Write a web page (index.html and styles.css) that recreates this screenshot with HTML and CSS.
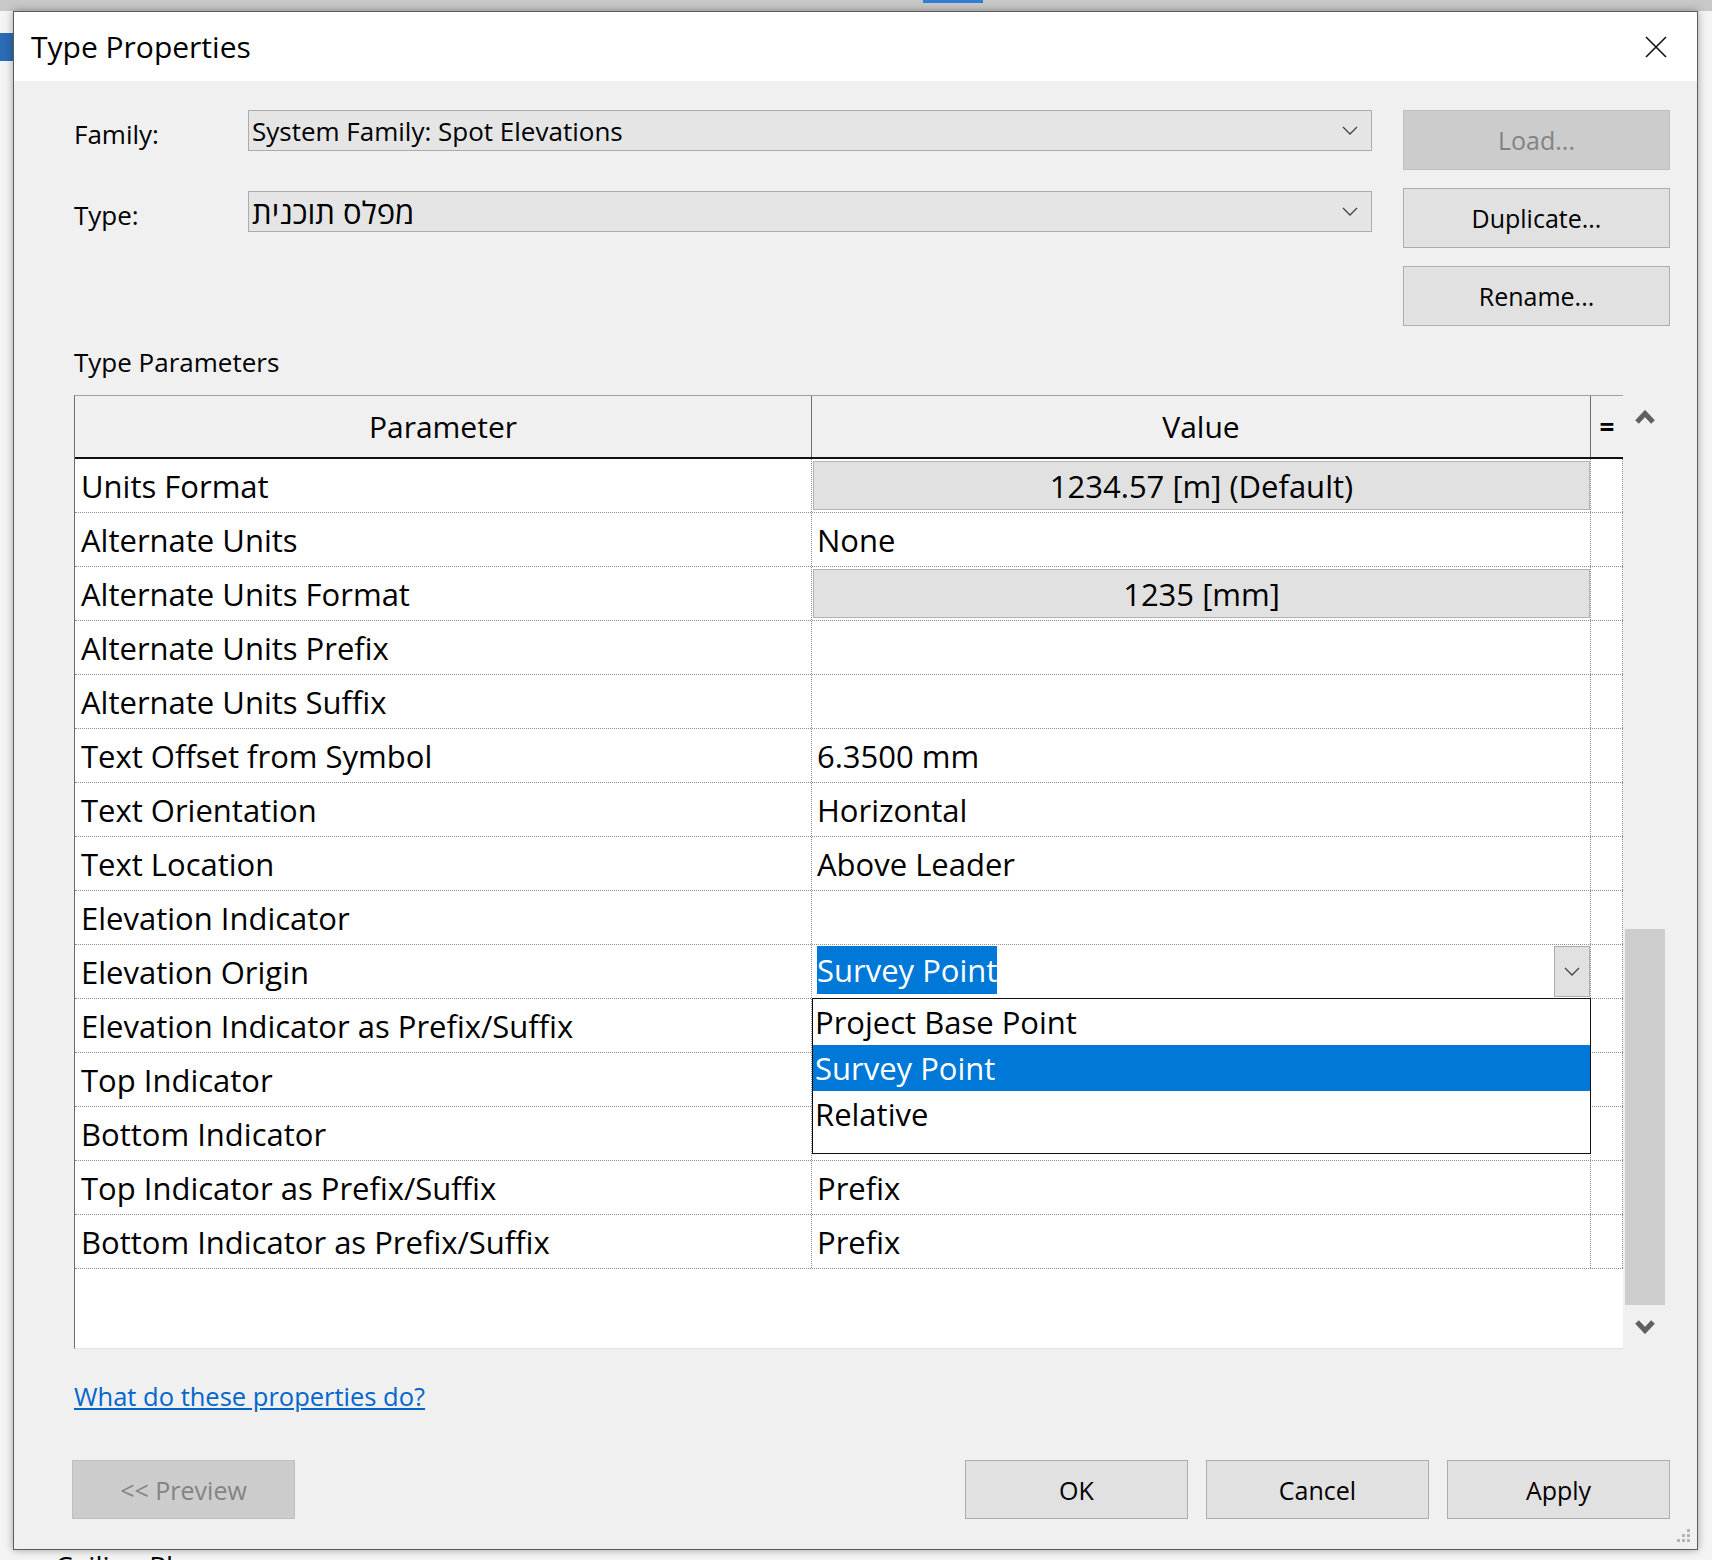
FILE: index.html
```html
<!DOCTYPE html>
<html lang="en">
<head>
    <meta charset="UTF-8">
    <meta name="viewport" content="width=device-width, initial-scale=1.0">
    <title>Type Properties</title>
    <link rel="stylesheet" href="styles.css">
</head>
<body>
    <div class="dialog">
        <div class="titlebar">
            <span class="title">Type Properties</span>
            <svg class="close" width="22" height="22" viewBox="0 0 22 22"><path d="M1 1 L21 21 M21 1 L1 21" stroke="#111" stroke-width="1.6" fill="none"/></svg>
        </div>

        <div class="content">
            <div class="top">
                <div class="fields">
                    <div class="field-label">Family:</div>
                    <div class="combo">
                        <span>System Family: Spot Elevations</span>
                        <svg class="chev" width="16" height="9" viewBox="0 0 16 9"><polyline points="1,1 8,8 15,1" stroke="#444" stroke-width="1.3" fill="none"/></svg>
                    </div>
                    <div class="field-label">Type:</div>
                    <div class="combo">
                        <span class="hebrew" dir="rtl">מפלס תוכנית</span>
                        <svg class="chev" width="16" height="9" viewBox="0 0 16 9"><polyline points="1,1 8,8 15,1" stroke="#444" stroke-width="1.3" fill="none"/></svg>
                    </div>
                </div>
                <div class="side-buttons">
                    <button class="btn" disabled>Load...</button>
                    <button class="btn">Duplicate...</button>
                    <button class="btn">Rename...</button>
                </div>
            </div>

            <div class="section-label">Type Parameters</div>

            <div class="grid">
                <div class="table">
                    <div class="row head">
                        <div class="cell">Parameter</div>
                        <div class="cell">Value</div>
                        <div class="cell eq">=</div>
                    </div>
                    <div class="row">
                        <div class="cell">Units Format</div>
                        <div class="cell boxed"><div class="box">1234.57 [m] (Default)</div></div>
                        <div class="cell"></div>
                    </div>
                    <div class="row">
                        <div class="cell">Alternate Units</div>
                        <div class="cell val">None</div>
                        <div class="cell"></div>
                    </div>
                    <div class="row">
                        <div class="cell">Alternate Units Format</div>
                        <div class="cell boxed"><div class="box">1235 [mm]</div></div>
                        <div class="cell"></div>
                    </div>
                    <div class="row">
                        <div class="cell">Alternate Units Prefix</div>
                        <div class="cell val"></div>
                        <div class="cell"></div>
                    </div>
                    <div class="row">
                        <div class="cell">Alternate Units Suffix</div>
                        <div class="cell val"></div>
                        <div class="cell"></div>
                    </div>
                    <div class="row">
                        <div class="cell">Text Offset from Symbol</div>
                        <div class="cell val">6.3500 mm</div>
                        <div class="cell"></div>
                    </div>
                    <div class="row">
                        <div class="cell">Text Orientation</div>
                        <div class="cell val">Horizontal</div>
                        <div class="cell"></div>
                    </div>
                    <div class="row">
                        <div class="cell">Text Location</div>
                        <div class="cell val">Above Leader</div>
                        <div class="cell"></div>
                    </div>
                    <div class="row">
                        <div class="cell">Elevation Indicator</div>
                        <div class="cell val"></div>
                        <div class="cell"></div>
                    </div>
                    <div class="row">
                        <div class="cell">Elevation Origin</div>
                        <div class="cell val editing">
                            <span class="sel">Survey Point</span>
                            <div class="dd-btn">
                                <svg width="16" height="9" viewBox="0 0 16 9"><polyline points="1,1 8,8 15,1" stroke="#444" stroke-width="1.3" fill="none"/></svg>
                            </div>
                            <div class="dropdown">
                                <div class="dd-item">Project Base Point</div>
                                <div class="dd-item active">Survey Point</div>
                                <div class="dd-item">Relative</div>
                            </div>
                        </div>
                        <div class="cell"></div>
                    </div>
                    <div class="row">
                        <div class="cell">Elevation Indicator as Prefix/Suffix</div>
                        <div class="cell val"></div>
                        <div class="cell"></div>
                    </div>
                    <div class="row">
                        <div class="cell">Top Indicator</div>
                        <div class="cell val"></div>
                        <div class="cell"></div>
                    </div>
                    <div class="row">
                        <div class="cell">Bottom Indicator</div>
                        <div class="cell val"></div>
                        <div class="cell"></div>
                    </div>
                    <div class="row">
                        <div class="cell">Top Indicator as Prefix/Suffix</div>
                        <div class="cell val">Prefix</div>
                        <div class="cell"></div>
                    </div>
                    <div class="row">
                        <div class="cell">Bottom Indicator as Prefix/Suffix</div>
                        <div class="cell val">Prefix</div>
                        <div class="cell"></div>
                    </div>
                    <div class="filler"></div>
                </div>

                <div class="scrollbar">
                    <div class="sb-arrow">
                        <svg width="20" height="14" viewBox="0 0 20 14"><polyline points="2,12 10,3.5 18,12" stroke="#606060" stroke-width="5" fill="none"/></svg>
                    </div>
                    <div class="sb-track"><div class="sb-thumb"></div></div>
                    <div class="sb-arrow">
                        <svg width="20" height="14" viewBox="0 0 20 14"><polyline points="2,2 10,10.5 18,2" stroke="#606060" stroke-width="5" fill="none"/></svg>
                    </div>
                </div>
            </div>

            <a class="help" href="#">What do these properties do?</a>

            <div class="footer">
                <button class="btn" disabled>&lt;&lt; Preview</button>
                <div class="footer-right">
                    <button class="btn">OK</button>
                    <button class="btn">Cancel</button>
                    <button class="btn">Apply</button>
                </div>
            </div>
        </div>

        <svg class="grip" width="14" height="14" viewBox="0 0 14 14" fill="#b5b5b5">
            <rect x="10" y="0" width="3" height="3"/>
            <rect x="5" y="5" width="3" height="3"/><rect x="10" y="5" width="3" height="3"/>
            <rect x="0" y="10" width="3" height="3"/><rect x="5" y="10" width="3" height="3"/><rect x="10" y="10" width="3" height="3"/>
        </svg>
    </div>
    <div class="behind">Ceiling Plans</div>
</body>
</html>
```

FILE: styles.css
```css
*{
    box-sizing: border-box;
}
body{
    margin: 0;
    height: 1560px;
    overflow: hidden;
    font-family: 'Open Sans', 'Liberation Sans', sans-serif;
    color: #000;
    background:
        linear-gradient(#2b6cb5, #2b6cb5) 0 33px / 13px 28px no-repeat,
        linear-gradient(#2f7fd6, #2f7fd6) 923px 0 / 60px 3px no-repeat,
        linear-gradient(#c8c8c8, #c8c8c8) 0 0 / 100% 11px no-repeat,
        #f4f4f4;
}
.dialog{
    position: relative;
    margin: 11px 0 0 13px;
    width: 1685px;
    height: 1539px;
    border: 1px solid #5c5c5c;
    background: #f0f0f0;
    box-shadow: 0 0 8px rgba(0, 0, 0, 0.35);
    display: flex;
    flex-direction: column;
}
.titlebar{
    height: 69px;
    background: white;
    display: flex;
    align-items: center;
    justify-content: space-between;
    padding: 0 30px 0 17px;
}
.title{
    font-size: 30px;
}
.content{
    flex: 1;
    padding: 29px 27px 0 60px;
}

/* family / type selectors */
.top{
    display: flex;
    justify-content: space-between;
}
.fields{
    display: grid;
    grid-template-columns: 174px 1124px;
    grid-auto-rows: 41px;
    row-gap: 40px;
    align-items: center;
}
.field-label{
    font-size: 26px;
    padding-top: 6px;
}
.combo{
    height: 41px;
    background: #e5e5e5;
    border: 1px solid #acacac;
    display: flex;
    align-items: center;
    justify-content: space-between;
    padding: 0 13px 0 3px;
    font-size: 26px;
}
.hebrew{
    font-size: 31px;
}
.side-buttons{
    display: flex;
    flex-direction: column;
    gap: 18px;
}
.btn{
    width: 267px;
    height: 60px;
    font-family: inherit;
    font-size: 25px;
    color: #000;
    background: #e1e1e1;
    border: 1px solid #adadad;
    padding: 0;
}
.btn:disabled{
    background: #cccccc;
    border-color: #bfbfbf;
    color: #838383;
}
.section-label{
    font-size: 26px;
    line-height: 34px;
    margin-top: 19px;
}

/* parameter grid */
.grid{
    margin-top: 16px;
    width: 1593px;
    height: 954px;
    display: flex;
}
.table{
    flex: 1;
    display: flex;
    flex-direction: column;
    background: white;
    border-left: 1px solid #6e6e6e;
    border-top: 1px solid #a0a0a0;
    border-bottom: 1px solid #e3e3e3;
}
.row{
    display: grid;
    grid-template-columns: 737px 779px 1fr;
    height: 54px;
    border-bottom: 1px dotted #8c8c8c;
    font-size: 31px;
}
.cell{
    display: flex;
    align-items: center;
    padding-left: 6px;
    border-right: 1px dotted #8c8c8c;
    white-space: nowrap;
}
.row.head{
    height: 63px;
    background: #f0f0f0;
    border-bottom: 2px solid #111;
    font-size: 30px;
}
.row.head .cell{
    justify-content: center;
    padding: 0;
    border-right: 1px solid #6e6e6e;
}
.row.head .cell.eq{
    font-weight: bold;
    font-size: 26px;
    border-right: none;
}
.cell.val{
    padding-left: 5px;
}
.cell.boxed{
    padding: 2px 0 2px 1px;
}
.box{
    flex: 1;
    height: 100%;
    background: #e1e1e1;
    border: 1px solid #b4b4b4;
    display: flex;
    align-items: center;
    justify-content: center;
}
.editing{
    position: relative;
    align-self: stretch;
    padding-right: 0;
}
.sel{
    background: #0078d7;
    color: white;
    line-height: 48px;
    margin-top: -3px;
}
.dd-btn{
    margin-left: auto;
    width: 36px;
    height: 51px;
    background: #e1e1e1;
    border: 1px solid #adadad;
    display: flex;
    align-items: center;
    justify-content: center;
}
.dropdown{
    position: absolute;
    left: 0;
    right: -1px;
    top: 53px;
    height: 156px;
    background: white;
    border: 1px solid #111;
    z-index: 2;
}
.dd-item{
    height: 46px;
    line-height: 46px;
    padding-left: 2px;
}
.dd-item.active{
    background: #0078d7;
    color: white;
}
.filler{
    flex: 1;
}

/* scrollbar */
.scrollbar{
    width: 44px;
    display: flex;
    flex-direction: column;
    background: #f0f0f0;
}
.sb-arrow{
    height: 44px;
    display: flex;
    align-items: center;
    justify-content: center;
}
.sb-track{
    flex: 1;
    display: flex;
    flex-direction: column;
    justify-content: flex-end;
}
.sb-thumb{
    height: 376px;
    margin: 0 2px;
    background: #cdcdcd;
}

/* bottom */
.help{
    display: inline-block;
    margin-top: 30px;
    font-size: 25.5px;
    line-height: 34px;
    color: #0066cc;
}
.footer{
    margin-top: 47px;
    display: flex;
    justify-content: space-between;
}
.footer .btn{
    width: 223px;
    height: 59px;
}
.footer > .btn{
    margin-left: -2px;
}
.footer-right{
    display: flex;
    gap: 18px;
}
.grip{
    position: absolute;
    right: 6px;
    bottom: 6px;
}
.behind{
    font-size: 28px;
    line-height: 30px;
    padding-left: 55px;
    margin-top: 1px;
}
```
